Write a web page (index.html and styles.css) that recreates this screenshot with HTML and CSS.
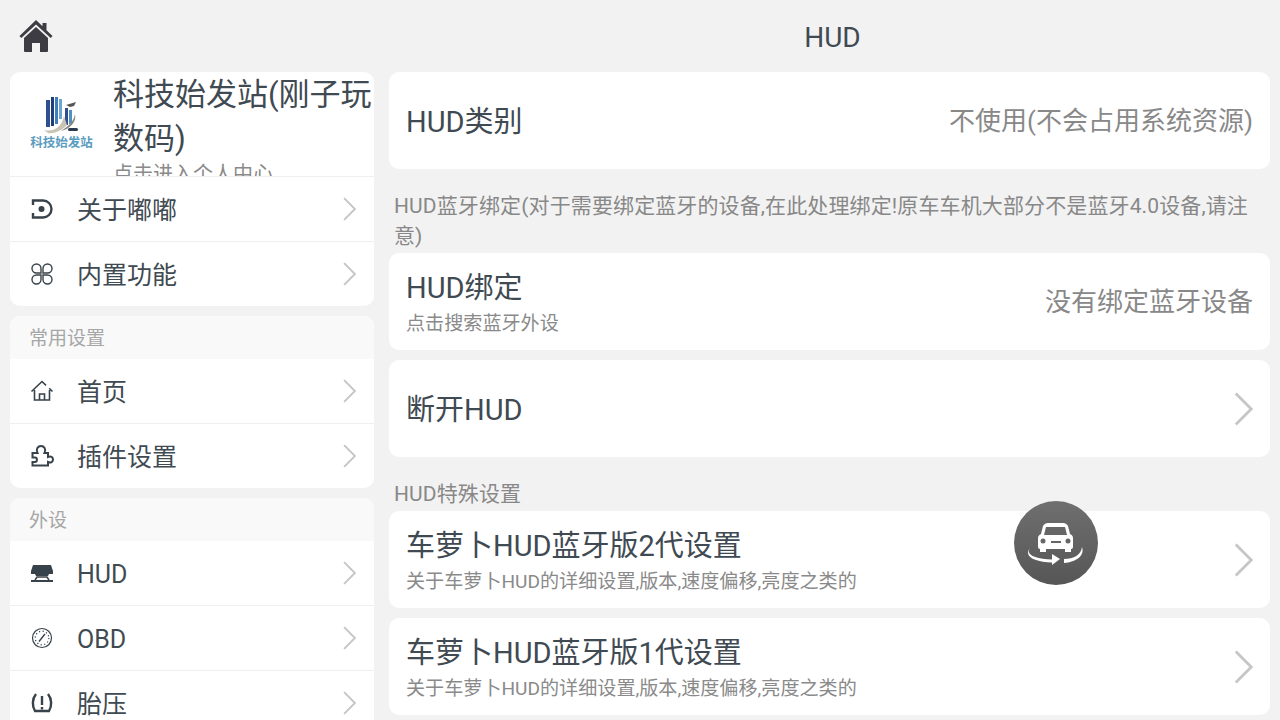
FILE: index.html
```html
<!DOCTYPE html>
<html lang="zh-CN">
<head>
<meta charset="UTF-8">
<title>HUD</title>
<link rel="stylesheet" href="styles.css">
</head>
<body>
<svg class="defs" width="0" height="0">
    <symbol id="arrow" viewBox="0 0 12 22"><polyline points="1,1 11,11 1,21" fill="none" stroke="#c6c6c6" stroke-width="1.8"/></symbol>
</svg>
<div class="app">
    <header class="topbar">
        <div class="home">
            <svg width="36" height="36" viewBox="0 0 36 36"><path d="M18 2 1.500 18l1.800 2L18 6.500 32.700 20l1.800-2-6-5.800V5h-4v3.300z" fill="#3c3c42"/><path d="M6 20 18 9l12 11v13a1 1 0 0 1-1 1h-7v-9h-8v9H7a1 1 0 0 1-1-1z" fill="#3c3c42"/></svg>
        </div>
        <h1 class="page-title">HUD</h1>
    </header>
    <div class="content">
        <aside class="sidebar">
            <section class="card">
                <div class="profile">
                    <div class="logo">
                        <svg width="36" height="40" viewBox="0 0 36 40">
                            <rect x="2" y="3" width="4" height="27" fill="#2f4f8f"/>
                            <rect x="7" y="0" width="3" height="29" fill="#1f3f7c"/>
                            <rect x="11" y="0" width="3" height="27" fill="#3f7fb8"/>
                            <rect x="15" y="2" width="3" height="20" fill="#6aa7d4"/>
                            <rect x="21" y="11" width="3" height="17" fill="#2f4f8f"/>
                            <rect x="25" y="13" width="3" height="14" fill="#4f8fc4"/>
                            <path d="M22 8l10-3-2 4-4 1z" fill="#555"/>
                            <path d="M0 33c8 2 17-1 20-14l3 9c-5 6-14 9-19 8z" fill="#c9c4b6"/>
                            <path d="M31 17c2 8-5 15-14 17 6-4 13-9 14-17z" fill="#8d8a80"/>
                            <rect x="24" y="31" width="10" height="3" rx="1.500" fill="#2b3a52"/>
                        </svg>
                        <span class="logo-name">科技始发站</span>
                    </div>
                    <div class="profile-text">
                        <div class="profile-name">科技始发站(刚子玩数码)</div>
                        <div class="profile-sub">点击进入个人中心</div>
                    </div>
                </div>
                <div class="menu-row">
                    <svg class="menu-icon" viewBox="0 0 24 24"><path d="M3 8V3.500h10a8.500 8.500 0 0 1 0 17H3V16" fill="none" stroke="#37424a" stroke-width="2.400"/><circle cx="11.500" cy="12" r="3" fill="#37424a"/></svg>
                    <span class="menu-label">关于嘟嘟</span>
                    <svg class="arrow"><use href="#arrow"/></svg>
                </div>
                <div class="menu-row">
                    <svg class="menu-icon" viewBox="0 0 24 24"><g fill="none" stroke="#37424a" stroke-width="1.400"><path d="M11 11H6.500A4.500 4.500 0 1 1 11 6.500z"/><path d="M13 11h4.500A4.500 4.500 0 1 0 13 6.500z"/><path d="M11 13H6.500A4.500 4.500 0 1 0 11 17.500z"/><path d="M13 13h4.500A4.500 4.500 0 1 1 13 17.500z"/></g></svg>
                    <span class="menu-label">内置功能</span>
                    <svg class="arrow"><use href="#arrow"/></svg>
                </div>
            </section>
            <section class="card">
                <div class="group-title">常用设置</div>
                <div class="menu-row">
                    <svg class="menu-icon" viewBox="0 0 24 24"><path d="M1.500 12.500 12 2.500l4 3.800M22.500 12.500l-3.300-3.200M4.500 11v10h15V11M9.500 21v-6h5v6" fill="none" stroke="#37424a" stroke-width="1.600"/></svg>
                    <span class="menu-label">首页</span>
                    <svg class="arrow"><use href="#arrow"/></svg>
                </div>
                <div class="menu-row">
                    <svg class="menu-icon" viewBox="0 0 24 24"><path d="M2.500 9h5C5.500 5 8 2 11 2s5.500 3 3.500 7H18v4c3-1.500 5 .5 5 2.500S21 19.500 18 18v3.500H2.500V18H5c2.500 0 2.500-4.500 0-4.500H2.500z" fill="none" stroke="#37424a" stroke-width="2"/></svg>
                    <span class="menu-label">插件设置</span>
                    <svg class="arrow"><use href="#arrow"/></svg>
                </div>
            </section>
            <section class="card">
                <div class="group-title">外设</div>
                <div class="menu-row">
                    <svg class="menu-icon" viewBox="0 0 24 24"><path d="M3 4h18l2 6v3h-4l-1 2H6l-1-2H1v-3z" fill="#37424a"/><path d="M5 19l2-3h10l2 3" fill="none" stroke="#37424a" stroke-width="1.500"/><rect x="1" y="19" width="22" height="2" fill="#37424a"/></svg>
                    <span class="menu-label latin">HUD</span>
                    <svg class="arrow"><use href="#arrow"/></svg>
                </div>
                <div class="menu-row">
                    <svg class="menu-icon" viewBox="0 0 24 24"><circle cx="12" cy="12" r="9.500" fill="none" stroke="#37424a" stroke-width="1.200"/><circle cx="12" cy="12" r="6.800" fill="none" stroke="#37424a" stroke-width="1.200" stroke-dasharray="1.200 2.400"/><path d="M9 15.500 15 8" stroke="#37424a" stroke-width="1.400"/></svg>
                    <span class="menu-label latin">OBD</span>
                    <svg class="arrow"><use href="#arrow"/></svg>
                </div>
                <div class="menu-row">
                    <svg class="menu-icon" viewBox="0 0 24 24"><path d="M6 3C2 8 2 15 5 20h14c3-5 3-12-1-17" fill="none" stroke="#37424a" stroke-width="2.400"/><path d="M12 5v9M12 16v2.500" stroke="#37424a" stroke-width="2.400"/></svg>
                    <span class="menu-label">胎压</span>
                    <svg class="arrow"><use href="#arrow"/></svg>
                </div>
            </section>
        </aside>
        <main class="main">
            <div class="item">
                <div class="item-text single"><div class="item-title">HUD类别</div></div>
                <div class="item-value">不使用(不会占用系统资源)</div>
            </div>
            <div class="section-label two-line">HUD蓝牙绑定(对于需要绑定蓝牙的设备,在此处理绑定!原车车机大部分不是蓝牙4.0设备,请注意)</div>
            <div class="item">
                <div class="item-text">
                    <div class="item-title">HUD绑定</div>
                    <div class="item-sub">点击搜索蓝牙外设</div>
                </div>
                <div class="item-value">没有绑定蓝牙设备</div>
            </div>
            <div class="item spaced">
                <div class="item-text single"><div class="item-title">断开HUD</div></div>
                <svg class="arrow-big"><use href="#arrow"/></svg>
            </div>
            <div class="section-label">HUD特殊设置</div>
            <div class="item">
                <div class="item-text">
                    <div class="item-title">车萝卜HUD蓝牙版2代设置</div>
                    <div class="item-sub">关于车萝卜HUD的详细设置,版本,速度偏移,亮度之类的</div>
                </div>
                <svg class="arrow-big"><use href="#arrow"/></svg>
            </div>
            <div class="item spaced">
                <div class="item-text">
                    <div class="item-title">车萝卜HUD蓝牙版1代设置</div>
                    <div class="item-sub">关于车萝卜HUD的详细设置,版本,速度偏移,亮度之类的</div>
                </div>
                <svg class="arrow-big"><use href="#arrow"/></svg>
            </div>
        </main>
    </div>
    <div class="float-btn">
        <svg width="60" height="60" viewBox="0 0 60 60">
            <path d="M17 13c1-2 3-3 5-3h15c2 0 4 1 5 3l2 8c2 1 3 2 3 4v9a2 2 0 0 1-2 2v3h-6v-3H20v3h-6v-3a2 2 0 0 1-2-2v-9c0-2 1-3 3-4z" fill="#fff"/>
            <path d="M20 14h19l2 8H18z" fill="#666"/>
            <circle cx="17" cy="28" r="2.500" fill="#666"/><circle cx="42" cy="28" r="2.500" fill="#666"/>
            <rect x="25" y="28" width="10" height="2" fill="#666"/>
            <path d="M4 35c-5 7 6 11 22 11.500v3C10 49-3 44 4 35z" fill="#fff"/>
            <path d="M26 41l8 5-8 6z" fill="#fff"/>
            <path d="M38 46c10 0 17-4 18-12 3 9-6 15-18 16z" fill="#fff"/>
        </svg>
    </div>
</div>
</body>
</html>
```

FILE: styles.css
```css
html, body {
    margin: 0;
    height: 720px;
    overflow: hidden;
}

body {
    background-color: #f2f2f2;
    font-family: Roboto, "Noto Sans CJK SC", sans-serif;
    color: #3f4a52;
}

.defs {
    display: none;
}

.app {
    position: relative;
    width: 1280px;
    height: 720px;
    overflow: hidden;
}

.topbar {
    display: flex;
    align-items: center;
    height: 72px;
}

.home {
    display: flex;
    width: 389px;
    padding-left: 18px;
    box-sizing: border-box;
}

.page-title {
    flex: 1;
    margin: 0;
    padding: 3px 4px 0 0;
    text-align: center;
    font-size: 28px;
    font-weight: 400;
}

.content {
    display: flex;
    padding: 0 10px;
    gap: 15px;
}

.sidebar {
    display: flex;
    flex-direction: column;
    gap: 10px;
    width: 364px;
    flex-shrink: 0;
}

.card {
    background-color: #fff;
    border-radius: 10px;
    overflow: hidden;
}

.profile {
    display: flex;
    align-items: flex-start;
    height: 104px;
    overflow: hidden;
    border-bottom: 1px solid #efefef;
}

.logo {
    display: flex;
    flex-direction: column;
    align-items: center;
    width: 103px;
    flex-shrink: 0;
    padding-top: 25px;
    box-sizing: border-box;
}

.logo-name {
    width: 70px;
    margin-top: -1px;
    text-align: center;
    font-size: 12.500px;
    line-height: 14px;
    font-weight: 700;
    color: #5a9cbf;
    white-space: nowrap;
}

.profile-text {
    flex: 1;
    min-width: 0;
    padding-top: 1px;
}

.profile-name {
    font-size: 31px;
    line-height: 44px;
    margin-right: -4px;
}

.profile-sub {
    font-size: 20px;
    line-height: 26px;
    color: #8a8a8a;
}

.group-title {
    height: 43px;
    padding-left: 19px;
    box-sizing: border-box;
    background-color: #f9f9f9;
    font-size: 19px;
    line-height: 45px;
    color: #a6a6a6;
}

.menu-row {
    display: flex;
    align-items: center;
    height: 64px;
    padding: 0 18px 0 20px;
}

.menu-row + .menu-row {
    border-top: 1px solid #efefef;
}

.menu-icon {
    width: 24px;
    height: 24px;
    flex-shrink: 0;
}

.menu-label {
    flex: 1;
    margin-left: 23px;
    padding-bottom: 2px;
    font-size: 25px;
}

.menu-label.latin {
    padding: 2px 0 0;
}

.arrow {
    width: 13px;
    height: 24px;
}

.main {
    flex: 1;
    min-width: 0;
}

.item {
    display: flex;
    align-items: center;
    justify-content: space-between;
    height: 97px;
    padding: 0 17px;
    background-color: #fff;
    border-radius: 10px;
}

.item.spaced {
    margin-top: 10px;
}

.item-text.single {
    padding-top: 3px;
}

.item-title {
    font-size: 29px;
    line-height: 44px;
}

.item-sub {
    font-size: 19.100px;
    line-height: 28px;
    color: #8a8a8a;
}

.item-value {
    padding-bottom: 4px;
    font-size: 26px;
    color: #888;
}

.arrow-big {
    width: 19px;
    height: 34px;
}

.section-label {
    height: 54px;
    padding: 22px 5px 0;
    box-sizing: border-box;
    font-size: 21px;
    line-height: 30px;
    letter-spacing: 0.12px;
    color: #888;
}

.section-label.two-line {
    height: 84px;
}

.float-btn {
    position: absolute;
    left: 1014px;
    top: 501px;
    display: flex;
    align-items: center;
    justify-content: center;
    width: 84px;
    height: 84px;
    border-radius: 50%;
    background: linear-gradient(#6f6f6f, #565656);
}
```
